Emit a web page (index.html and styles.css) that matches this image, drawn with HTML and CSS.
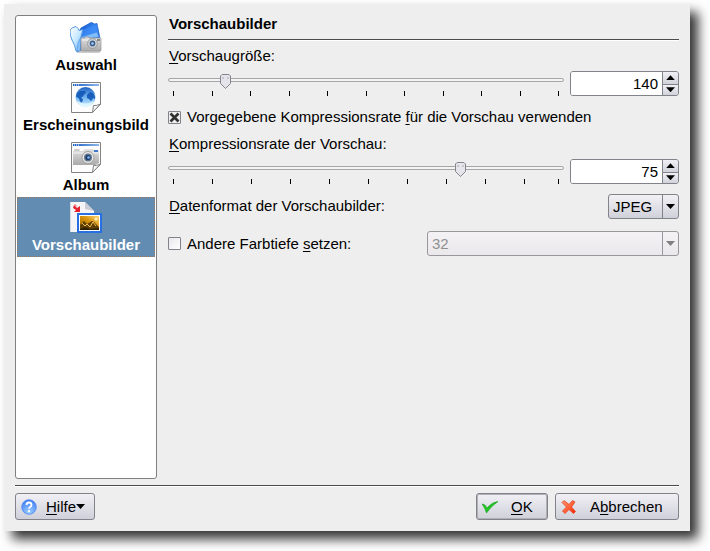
FILE: index.html
```html
<!DOCTYPE html>
<html lang="de">
<head>
<meta charset="utf-8">
<title>Vorschaubilder</title>
<link rel="stylesheet" href="styles.css">
</head>
<body>
<svg class="defs" width="0" height="0" aria-hidden="true">
  <defs>
    <linearGradient id="blue" x1="0" y1="0" x2="1" y2="1"><stop offset="0" stop-color="#0b4fc8"/><stop offset=".5" stop-color="#3d8df5"/><stop offset="1" stop-color="#1660d8"/></linearGradient>
    <linearGradient id="pale" x1="0" y1="0" x2="1" y2="1"><stop offset="0" stop-color="#fff"/><stop offset=".5" stop-color="#c5e8ff"/><stop offset="1" stop-color="#3f9bff"/></linearGradient>
    <linearGradient id="bar" x1="0" x2="1"><stop offset="0" stop-color="#1c5fc4"/><stop offset="1" stop-color="#8fb8ea"/></linearGradient>
    <linearGradient id="metal" x1="0" y1="0" x2="0" y2="1"><stop offset="0" stop-color="#e2e2e2"/><stop offset="1" stop-color="#aaa"/></linearGradient>
    <linearGradient id="globe" x1="0" y1="0" x2="0" y2="1"><stop offset="0" stop-color="#1f60c0"/><stop offset=".5" stop-color="#6fb2f0"/><stop offset="1" stop-color="#d0f0ff"/></linearGradient>
    <linearGradient id="gold" x1="1" y1="0" x2="0" y2="1"><stop offset="0" stop-color="#ffd873"/><stop offset=".45" stop-color="#d8920c"/><stop offset="1" stop-color="#9c6400"/></linearGradient>
    <linearGradient id="red" x1="0" y1="0" x2="1" y2="1"><stop offset="0" stop-color="#ff9a70"/><stop offset=".6" stop-color="#ff5a30"/><stop offset="1" stop-color="#f01800"/></linearGradient>
    <linearGradient id="green" x1="0" y1="0" x2="1" y2="1"><stop offset="0" stop-color="#35e035"/><stop offset="1" stop-color="#08b010"/></linearGradient>
    <radialGradient id="help" cx=".5" cy=".85" r=".8"><stop offset="0" stop-color="#9fd0ff"/><stop offset="1" stop-color="#4280f4"/></radialGradient>
  </defs>
</svg>
<form class="dialog">
  <div class="content">
    <nav class="sidebar">
      <a class="entry" href="#auswahl">
        <svg class="picture" viewBox="0 0 32 32" aria-hidden="true">
          <path d="M6 31l4-3 19 1 2 1-2 2H8z" fill="#999" opacity=".5"/>
          <path d="M9 11l2-4 10-5.500 2 .5 1 1 3-.5 3 15-20 12z" fill="url(#blue)" stroke="#1b5cc8" stroke-width=".7"/>
          <path d="M12 9l13-5 1.500 8L12 20z" fill="#3f8df8" opacity=".6"/>
          <path d="M0 10q0-2 2-3l4-1.500 2 2 1 2 4-1L10 20l-2 11-2-1q-1-6-4-11Q0 15 0 10z" fill="url(#pale)" stroke="#4a90dc" stroke-width=".9"/>
          <path d="M7 30q0-9 4-14l16-5 2 5-18 3-1 11z" fill="#8cc8ff" stroke="#3f83d8" stroke-width=".6" opacity=".85"/>
          <path d="M12 17h3v-1h4v1h11q1 0 1 1v11q0 1-1 1H12q-1 0-1-1V18q0-1 1-1z" fill="url(#metal)" stroke="#959595" stroke-width=".7"/>
          <path d="M12 19h18" stroke="#f5f5f5"/>
          <circle cx="22.500" cy="22.500" r="4.800" fill="#d5dbe0" stroke="#888" stroke-width=".8"/>
          <circle cx="22.500" cy="22.500" r="2.900" fill="#3d5d86"/><circle cx="22.500" cy="22.500" r="1.300" fill="#a1ccf9"/>
          <path d="M27 18h3v2h-3z" fill="#888"/>
        </svg>
        <span>Auswahl</span>
      </a>
      <a class="entry" href="#erscheinungsbild">
        <svg class="picture" viewBox="0 0 32 32" aria-hidden="true">
          <path d="M1.500 1.500h29v22l-8 8h-21z" fill="#fdfdfd" stroke="#828282"/>
          <path d="M3 3h26v2H3z" fill="url(#bar)"/><path d="M4 4h5" stroke="#fff" stroke-dasharray="1 1"/>
          <circle cx="15.500" cy="16" r="10" fill="url(#globe)"/>
          <path d="M7 12l3-2 5 0 1 1.500-2 2-1 2-2 1 1 1 1 1-1 3-2-1-1-3-3-2zM17 14l3-3 3 1 2 4v2l-2-1-1 2-1 1-2-2-2-1z" fill="#1257b5" opacity=".9"/>
          <path d="M7 20q8 5 17 0-3 6-8.500 6T7 20z" fill="#e4f9ff" opacity=".85"/>
          <path d="M22.500 31.500l1-7q3 .5 7-1.500z" fill="#f7f7f7" stroke="#828282"/>
        </svg>
        <span>Erscheinungsbild</span>
      </a>
      <a class="entry" href="#album">
        <svg class="picture" viewBox="0 0 32 32" aria-hidden="true">
          <path d="M1.500 1.500h29v22l-8 8h-21z" fill="#fdfdfd" stroke="#828282"/>
          <path d="M3 3h26v2H3z" fill="url(#bar)"/><path d="M4 4h5" stroke="#fff" stroke-dasharray="1 1"/>
          <path d="M3 10h2V8h5v2h3l2-2h8l2 2h4v12l-4 2H3z" fill="url(#metal)"/>
          <path d="M3 12h26" stroke="#f4f4f4"/><path d="M4 9h5" stroke="#b5b5b5"/>
          <path d="M24 9h4v2h-4z" fill="#3f78c8"/>
          <circle cx="18" cy="16.500" r="6" fill="#e8e8e8" stroke="#a0a0a0"/>
          <circle cx="18" cy="16.500" r="4" fill="#65758c"/><circle cx="18" cy="16.500" r="2.500" fill="#173966"/><circle cx="18.500" cy="16.500" r="1.300" fill="#82bdff"/>
          <path d="M22.500 31.500l1-7q3 .5 7-1.500z" fill="#f7f7f7" stroke="#828282"/>
        </svg>
        <span>Album</span>
      </a>
      <a class="entry selected" href="#vorschaubilder" aria-current="page">
        <svg class="picture" viewBox="0 0 32 32" aria-hidden="true">
          <path d="M0 1h15l9 9v21H0z" fill="#f5f5f7"/><path d="M15 1l9 9-9-2z" fill="#cbcbd5"/><path d="M0 31V1h1v30z" fill="#d5d9e3"/>
          <path d="M4 4l3 3 3-2v6H4l2-2-3-2z" fill="#e4202f"/><path d="M4 4l2 2 1-1-2-2z" fill="#f77c82"/>
          <path d="M7 12h25v20H7z" fill="#2870e0"/><path d="M9 14h21v16H9z" fill="#fff"/><path d="M10 15h19v14H10z" fill="url(#gold)"/>
          <path d="M10 24l4-4 3 3 5-3 2 1 5 5v3H10z" fill="#604000"/><path d="M12 22l3 3 2-2 3 3 3-5 3 4" fill="none" stroke="#eebc4d"/><path d="M10 28l5-2 5 2 9-1v2H10z" fill="#2f2000"/>
          <circle cx="26" cy="18" r="1.500" fill="#fff4bd"/>
        </svg>
        <span>Vorschaubilder</span>
      </a>
    </nav>
    <main class="page">
      <h1 class="title">Vorschaubilder</h1>
      <hr class="rule">
      <label class="caption" for="size"><u>V</u>orschaugröße:</label>
      <div class="setting">
        <div class="scale">
          <input class="slider" id="size" type="range" min="100" max="400" value="140">
          <div class="ticks"><i></i><i></i><i></i><i></i><i></i><i></i><i></i><i></i><i></i><i></i><i></i></div>
        </div>
        <div class="spin">
          <input class="number" type="text" inputmode="numeric" value="140" aria-label="Vorschaugröße">
          <button class="step up" type="button" aria-label="Mehr"></button>
          <button class="step down" type="button" aria-label="Weniger"></button>
        </div>
      </div>
      <div class="option preset">
        <input class="check" id="preset" type="checkbox" checked>
        <label for="preset">Vorgegebene Kompressionsrate <u>f</u>ür die Vorschau verwenden</label>
      </div>
      <label class="caption" for="rate"><u>K</u>ompressionsrate der Vorschau:</label>
      <div class="setting">
        <div class="scale">
          <input class="slider" id="rate" type="range" min="1" max="100" value="75">
          <div class="ticks uneven"><i></i><i></i><i></i><i></i><i></i><i></i><i></i><i></i><i></i><i></i><i></i></div>
        </div>
        <div class="spin">
          <input class="number" type="text" inputmode="numeric" value="75" aria-label="Kompressionsrate">
          <button class="step up" type="button" aria-label="Mehr"></button>
          <button class="step down" type="button" aria-label="Weniger"></button>
        </div>
      </div>
      <div class="field format">
        <label for="format"><u>D</u>atenformat der Vorschaubilder:</label>
        <span class="combo"><select id="format"><option>JPEG</option></select></span>
      </div>
      <div class="field depth">
        <div class="option">
          <input class="check" id="depth" type="checkbox">
          <label for="depth">Andere Farbtiefe <u>s</u>etzen:</label>
        </div>
        <span class="combo disabled"><select disabled aria-label="Farbtiefe"><option>32</option></select></span>
      </div>
    </main>
  </div>
  <hr class="rule">
  <footer class="actions">
    <button class="button help" type="button">
      <svg class="glyph" viewBox="0 0 16 16" aria-hidden="true"><circle cx="8" cy="8" r="7.300" fill="url(#help)" stroke="#4c88f4" stroke-width=".8"/><path d="M5.500 6q0-2.500 2.500-2.500T10.500 6q0 1-1.300 1.900Q8 8.700 8 9.800" fill="none" stroke="#fff" stroke-width="1.800"/><circle cx="8" cy="12.200" r="1.100" fill="#fff"/></svg>
      <span><u>H</u>ilfe</span><i class="more"></i>
    </button>
    <button class="button ok" type="submit">
      <svg class="glyph" viewBox="0 0 16 16" aria-hidden="true"><path d="M0 5l3 1 2 3q5-6 11-6.500Q9 7 4.500 14 3 9 0 5z" fill="url(#green)" stroke="#16991a" stroke-width=".6"/></svg>
      <span><u>O</u>K</span>
    </button>
    <button class="button cancel" type="button">
      <svg class="glyph" viewBox="0 0 16 16" aria-hidden="true"><path d="M1 3.500L3 1.500l5 4 3.500-4L14 3l-3.500 5 4 4.500-2 2L8 10.500l-4 4L1.500 12l4-4z" fill="url(#red)" stroke="#e5431f" stroke-width=".8"/></svg>
      <span>A<u>b</u>brechen</span>
    </button>
  </footer>
</form>
</body>
</html>
```
FILE: styles.css
```css
* { box-sizing: border-box; }

body {
  margin: 0;
  min-height: 100vh;
  padding: 4px 20px 20px 4px;
  display: flex;
  background: #fff;
  color: #000;
  font: 15px/18px "Liberation Sans", Arial, sans-serif;
}

input, select, button { font: inherit; color: inherit; margin: 0; }
u { text-decoration-thickness: 1px; text-underline-offset: 2px; text-decoration-skip-ink: none; }
.defs { position: absolute; }

.dialog {
  flex: 1;
  min-width: 0;
  padding: 11px;
  display: flex;
  flex-direction: column;
  gap: 6px;
  background: #eee;
  box-shadow: 8px 8px 11px #000c;
}

.content {
  flex: 1;
  display: grid;
  grid-template-columns: 142px minmax(0, 1fr);
  gap: 11px;
}

.sidebar {
  padding: 1px;
  border: 1px solid #808080;
  border-radius: 3px;
  background: #fff;
}

.entry {
  height: 60px;
  padding-top: 4px;
  display: flex;
  flex-direction: column;
  align-items: center;
  gap: 3px;
  color: #000;
  font-weight: bold;
  text-decoration: none;
}
.entry.selected { background: #628cb2; color: #fff; outline: 1px dotted #a0785c; outline-offset: -1px; }
.picture { width: 32px; height: 32px; }

.page { display: flex; flex-direction: column; }
.title { margin: 0 0 6px; padding-left: 1px; font-size: 15px; line-height: 18px; }
.rule { width: 100%; height: 2px; margin: 0; border: 0; border-top: 1px solid #4b4b4b; background: #fff; }
.caption { margin: 6px 0; padding-left: 1px; align-self: flex-start; }

.setting { display: flex; gap: 6px; }
.scale { flex: 1; min-width: 0; }

.slider {
  appearance: none;
  display: block;
  width: 100%;
  height: 18px;
  background: none;
}
.slider::-webkit-slider-runnable-track {
  height: 4px;
  border: 1px solid #a5a5a5;
  border-radius: 2px;
  background: #f4f4f4;
}
.slider::-webkit-slider-thumb {
  appearance: none;
  width: 11px;
  height: 15px;
  margin-top: -5px;
  background: url("data:image/svg+xml,%3Csvg xmlns='http://www.w3.org/2000/svg' width='11' height='15'%3E%3Cpath d='M2 .5h7l1.500 1.500v7.500l-5 5-5-5V2z' fill='%23e4e4ea' stroke='%2385858d'/%3E%3Cpath d='M2 4h2M7 4h2' stroke='%23aaaab4'/%3E%3C/svg%3E");
}

.ticks { display: flex; justify-content: space-between; padding: 2px 5px 0; }
.ticks i { width: 1px; height: 5px; background: #000; }
.ticks.uneven { display: grid; grid-template-columns: repeat(9, 39fr) 34fr 1px; justify-content: initial; }

.spin {
  width: 109px;
  height: 25px;
  display: grid;
  grid-template: 1fr 1fr / 1fr 16px;
  border: 1px solid #82828a;
  border-radius: 3px;
  overflow: hidden;
}
.number { grid-row: 1 / 3; width: 100%; min-width: 0; padding: 0 4px; border: 0; background: #fff; text-align: right; }
.step {
  padding: 0;
  display: grid;
  place-items: center;
  border: 0;
  border-left: 1px solid #82828a;
  background: linear-gradient(#f0f0f5, #d2d2da);
}
.step.down { border-top: 1px solid #82828a; }
.step::before, .more { content: ""; width: 9px; height: 5px; background: #000; clip-path: polygon(0 0, 100% 0, 50% 100%); }
.step.up::before { clip-path: polygon(50% 0, 100% 100%, 0 100%); }

.option { display: flex; align-items: center; gap: 6px; }
.preset { margin: 12px 0 3px; }
.check {
  appearance: none;
  width: 13px;
  height: 13px;
  border: 1px solid #82828a;
  border-radius: 1px;
  background: linear-gradient(135deg, #e8e8ec, #fff);
}
.check:checked {
  background: url("data:image/svg+xml,%3Csvg xmlns='http://www.w3.org/2000/svg' viewBox='0 0 11 11'%3E%3Cpath d='M1.500 1.500l8 8M9.500 1.500l-8 8' stroke='%23303030' stroke-width='2.600'/%3E%3C/svg%3E") #eee;
}

.field { display: flex; align-items: center; justify-content: space-between; }
.format { margin-top: 10px; }
.format label { padding: 0 0 1px 1px; }
.depth { margin-top: 12px; }
.combo { position: relative; width: 71px; height: 25px; color: #000; }
.combo select {
  appearance: none;
  width: 100%;
  height: 100%;
  padding: 0 20px 0 4px;
  border: 1px solid #82828a;
  border-radius: 3px;
  background: linear-gradient(#f2f2f5, #d0d0da);
}
.combo::before { content: ""; position: absolute; top: 1px; bottom: 1px; right: 16px; width: 1px; background: #82828a; }
.combo::after {
  content: "";
  position: absolute;
  top: 10px;
  right: 4px;
  width: 9px;
  height: 5px;
  background: currentColor;
  clip-path: polygon(0 0, 100% 0, 50% 100%);
}
.combo.disabled { width: 252px; color: #808080; }
.combo.disabled select { color: #909090; opacity: 1; border-color: #98989c; background: linear-gradient(#f4f2f4, #ebe8eb); }
.combo.disabled::before { background: #98989c; }

.actions { display: flex; gap: 7px; }
.button {
  height: 27px;
  padding: 0 5px;
  display: flex;
  align-items: center;
  border: 1px solid #82828a;
  border-radius: 3px;
  background: linear-gradient(#f0f0f5, #d0d0da);
}
.glyph { width: 16px; height: 16px; }
.help { width: 80px; margin-right: auto; }
.help span { margin-left: 9px; }
.ok { width: 72px; box-shadow: inset 0 0 0 1px #b0b0b6; }
.ok span { margin-left: 13px; }
.cancel { width: 124px; }
.cancel span { margin-left: 13px; }
```
